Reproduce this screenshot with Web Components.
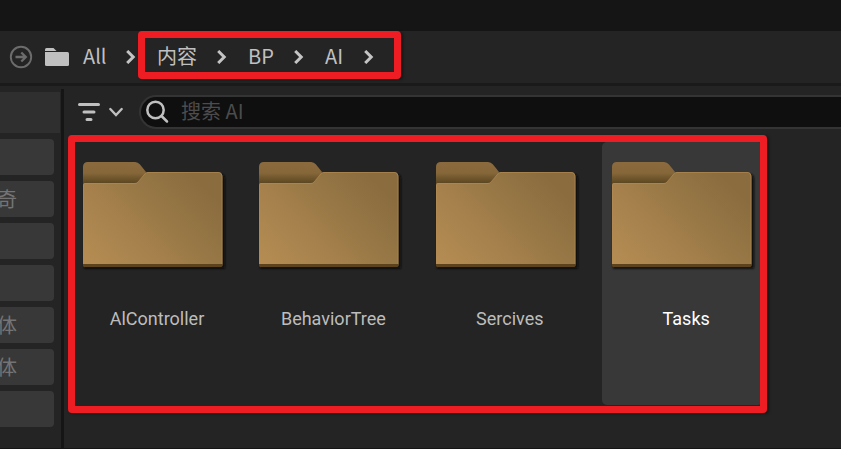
<!DOCTYPE html>
<html lang="zh-CN">
<head>
<meta charset="utf-8">
<title>Content Browser</title>
<style>
html,body{margin:0;width:841px;height:449px;overflow:hidden;background:#242424}
</style>
</head>
<body>
<content-browser></content-browser>
<script>
function define(name, markup) {
  const t = document.createElement('template');
  t.innerHTML = markup;
  customElements.define(name, class extends HTMLElement {
    constructor() {
      super();
      this.attachShadow({mode: 'open'}).appendChild(t.content.cloneNode(true));
    }
  });
}

define('crumb-arrow', `<style>:host{display:block;width:10px;height:14px}svg{display:block}</style>
<svg width="10" height="14" viewBox="0 0 10 14"><path d="M1.2 1 7.2 7l-6 6" fill="none" stroke="#c4c4c4" stroke-width="3"/></svg>`);

define('crumb-text', `<style>:host{display:block;line-height:30px;white-space:nowrap}</style><slot></slot>`);

define('path-bar', `<style>
:host{display:flex;align-items:center;height:52px;box-sizing:border-box;padding-left:9px;background:#242424;color:#c0c0c0;font-size:20px}
svg{display:block;flex:none}
.go{margin-right:12px}.dir{margin-right:14px}
crumb-text,crumb-arrow{flex:none}
crumb-text{margin-bottom:2px}
</style>
<svg class="go" width="24" height="24" viewBox="0 0 24 24" fill="none" stroke="#6c6c6c"><circle cx="12" cy="12" r="10.2" stroke-width="1.9"/><path d="M6.500 12h10M12.300 7.500 16.800 12l-4.500 4.500" stroke-width="2.3"/></svg>
<svg class="dir" width="24" height="20" viewBox="0 0 24 20" fill="#c0c0c0"><path d="M0 4V2.500Q0 1 1.500 1H8.500L11.500 4Z"/><path d="M0 5H22.500Q24 5 24 6.500V17.500Q24 19 22.500 19H1.500Q0 19 0 17.500Z"/></svg>
<crumb-text style="width:43px">All</crumb-text><crumb-arrow style="margin-right:21px"></crumb-arrow>
<crumb-text style="width:60px">内容</crumb-text><crumb-arrow style="margin-right:21px"></crumb-arrow>
<crumb-text style="width:46px">BP</crumb-text><crumb-arrow style="margin-right:21px"></crumb-arrow>
<crumb-text style="width:39px">AI</crumb-text><crumb-arrow></crumb-arrow>`);

define('filter-chip', `<style>
:host{display:flex;align-items:center;justify-content:flex-end;box-sizing:border-box;width:54px;height:36px;padding-right:37px;border-radius:0 4px 4px 0;background:#383838;color:#747474;font-size:20px;overflow:hidden}
span{flex:none;line-height:36px}
</style><span><slot></slot></span>`);

define('filter-panel', `<style>
:host{display:flex;flex-direction:column;gap:6px;width:61px;padding-top:6px;box-sizing:border-box}
.head{width:60px;height:41px;background:#2f2f2f}
</style><div class="head"></div>
<filter-chip></filter-chip><filter-chip>奇</filter-chip><filter-chip></filter-chip><filter-chip></filter-chip><filter-chip>体</filter-chip><filter-chip>体</filter-chip><filter-chip></filter-chip>`);

define('search-row', `<style>
:host{display:flex;height:34px;padding:9px 0 0 14px;align-items:center}
svg{display:block;flex:none}
.box{flex:1;display:flex;align-items:center;height:34px;box-sizing:border-box;margin-left:15px;border:2px solid #343434;border-right:0;border-radius:17px 0 0 17px;background:#0f0f0f;color:#4c4c4c;font-size:20px;padding-left:5px}
.box span{margin:0 0 3px 11px;line-height:27px}
</style>
<svg width="46" height="22" viewBox="0 0 46 22" fill="none" stroke="#c0c0c0" stroke-linecap="round"><path d="M1.500 3.500h19M6 11h10M9 18.500h4" stroke-width="3"/><path d="m32.300 8 5.700 6 5.700-6" stroke-width="2.4"/></svg>
<div class="box"><svg width="24" height="24" viewBox="0 0 24 24" fill="none" stroke="#c0c0c0" stroke-width="2.5" stroke-linecap="round"><circle cx="9.500" cy="10" r="8.2"/><path d="m15.500 16 5.500 5.500"/></svg><span>搜索 AI</span></div>`);

define('folder-icon', `<style>:host{display:block;width:146px;height:112px}svg{display:block}</style>
<svg width="146" height="112" viewBox="0 0 146 112">
<defs>
<linearGradient id="f" gradientUnits="userSpaceOnUse" x1="4" y1="106" x2="103" y2="7"><stop offset="0" stop-color="#b58d53"/><stop offset=".42" stop-color="#a5804c"/><stop offset=".62" stop-color="#997946"/><stop offset="1" stop-color="#8a6c3f"/></linearGradient>
<linearGradient id="t" x1="0" y1="0" x2="0" y2="1"><stop offset="0" stop-color="#8b6b3d"/><stop offset=".5" stop-color="#866739"/><stop offset="1" stop-color="#58431f"/></linearGradient>
<filter id="s"><feGaussianBlur stdDeviation=".8"/></filter>
</defs>
<path d="M2 24H57L65 14H138Q143 14 143 19V108.500H2Z" fill="#090909" filter="url(#s)"/>
<path d="M1 24V7Q1 2 6 2H53Q56 2 58 4.500L64 12 60 24Z" fill="url(#t)"/>
<path d="M1 106V25Q1 23 3 23H53Q55 23 56 22L63 13.500Q64 12 66 12H136Q140.500 12 140.500 17V105Q140.500 106 139.500 106Z" fill="url(#f)"/>
<path d="M1.500 104V25Q1.500 23.500 3 23.500H53Q55 23.500 56 22L63.500 13.200Q64.200 12.500 66 12.500H136Q140 12.500 140 17V104" fill="none" stroke="#b38b52" stroke-opacity=".65"/>
<path d="M1 104H140.500V105.500Q140.500 107 139 107H2.500Q1 107 1 105.500Z" fill="#5c431d"/>
</svg>`);

define('folder-tile', `<style>
:host{display:block;width:161px;height:263px;box-sizing:border-box;padding:18px 0 0 9px;border-radius:5px;color:#bdbdbd;font:18px/24px Roboto,sans-serif}
:host([selected]){background:#383838;color:#fff}
.n{width:150px;margin-top:35px;text-align:center}
</style><folder-icon></folder-icon><div class="n"><slot></slot></div>`);

define('folder-grid', `<style>
:host{display:grid;grid-template-columns:repeat(4,161px);column-gap:15.4px;padding:13px 0 0 9px}
</style>
<folder-tile>AlController</folder-tile><folder-tile>BehaviorTree</folder-tile><folder-tile>Sercives</folder-tile><folder-tile selected>Tasks</folder-tile>`);

define('highlight-frame', `<style>
:host{display:block;position:absolute;box-sizing:border-box;border:7px solid #ee1c23;border-radius:4px;box-shadow:2px 1px 3px #0006}
</style>`);

define('content-browser', `<style>
:host{display:flex;flex-direction:column;position:relative;width:841px;height:449px;background:#242424;font-family:"Noto Sans CJK SC",sans-serif;overflow:hidden}
.top{height:31px;background:#151515;flex:none}
.rule{height:3px;background:#1a1a1a;flex:none}
.main{display:flex;flex:1;min-height:0;border-bottom:1px solid #151515}
.split{width:3px;margin-top:3px;background:#151515;flex:none}
.right{flex:1;min-width:0}
path-bar,filter-panel{flex:none}
</style>
<div class="top"></div><path-bar></path-bar><div class="rule"></div>
<div class="main"><filter-panel></filter-panel><div class="split"></div><div class="right"><search-row></search-row><folder-grid></folder-grid></div></div>
<highlight-frame style="left:138px;top:31px;width:263px;height:48px"></highlight-frame>
<highlight-frame style="left:68px;top:135px;width:699px;height:278px"></highlight-frame>`);
</script>
</body>
</html>
